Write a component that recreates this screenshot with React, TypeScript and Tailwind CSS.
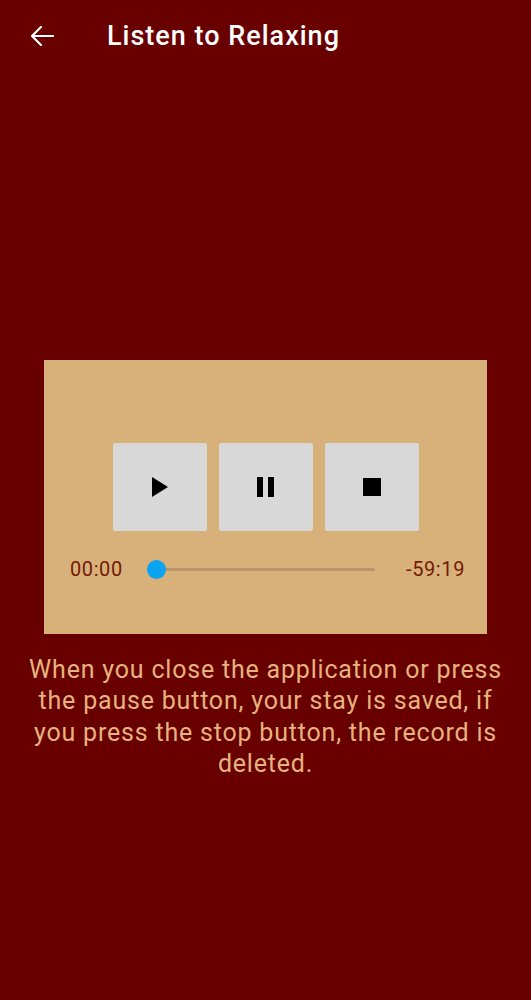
function PlayerButton({ children }: { children: React.ReactNode }) {
  return (
    <button className="flex h-[88px] w-[94px] items-center justify-center rounded-[2px] bg-[#d8d8d8]">
      {children}
    </button>
  );
}

export default function App() {
  return (
    <div className="flex min-h-[1000px] w-full flex-col bg-[#690000] font-['Roboto',sans-serif]">
      <header className="flex h-[72px] items-center pl-[30px]">
        <svg width="24" height="20" viewBox="0 0 24 20" fill="none">
          <path
            d="M23 10H2 M11 1L2 10L11 19"
            stroke="#fff"
            strokeWidth="2.2"
            strokeLinecap="round"
            strokeLinejoin="round"
          />
        </svg>
        <h1 className="ml-[53px] mt-[1px] text-[27px] font-medium tracking-[1px] text-white">
          Listen to Relaxing
        </h1>
      </header>

      <div className="mx-[44px] mt-[288px] flex h-[274px] flex-col items-center bg-[#d7b07a]">
        <div className="mt-[83px] flex gap-[12px]">
          <PlayerButton>
            <svg width="16" height="20" viewBox="0 0 16 20">
              <path d="M0 0 L16 10 L0 20 Z" fill="#000" />
            </svg>
          </PlayerButton>
          <PlayerButton>
            <svg width="17" height="20" viewBox="0 0 17 20">
              <rect x="0" y="0" width="6" height="20" fill="#000" />
              <rect x="11" y="0" width="6" height="20" fill="#000" />
            </svg>
          </PlayerButton>
          <PlayerButton>
            <svg width="18" height="18" viewBox="0 0 18 18">
              <rect x="0" y="0" width="18" height="18" fill="#000" />
            </svg>
          </PlayerButton>
        </div>

        <div className="mt-[23px] flex w-full items-center pl-[26px] pr-[22px]">
          <span className="text-[20px] tracking-[0.6px] text-[#741a05]">00:00</span>
          <div className="relative ml-[24px] h-[3px] w-[228px] rounded bg-[#b8946a]">
            <div className="absolute -top-[8px] left-0 h-[19px] w-[19px] rounded-full bg-[#0aa4f0]" />
          </div>
          <span className="ml-auto text-[20px] tracking-[0.6px] text-[#741a05]">-59:19</span>
        </div>
      </div>

      <p className="mt-[20px] px-[20px] text-center text-[25px] leading-[31.3px] tracking-[0.8px] text-[#e5b37f]">
        When you close the application or press the pause button, your stay is
        saved, if you press the stop button, the record is deleted.
      </p>
    </div>
  );
}
